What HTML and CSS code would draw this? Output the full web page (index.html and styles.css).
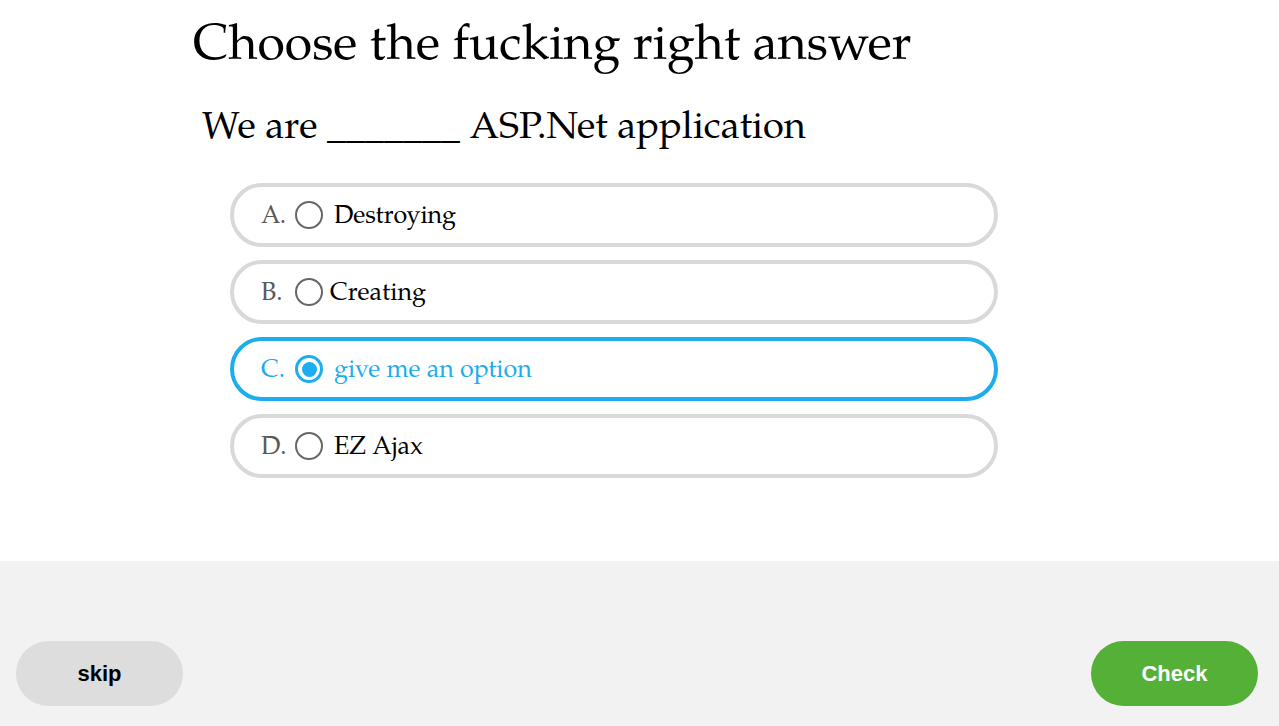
FILE: index.html
```html
<!DOCTYPE html>
<html>
<head>
<meta charset="utf-8">
<link rel="stylesheet" href="styles.css">
</head>
<body>
<div class="page">
  <main class="main">
    <h1 class="title">Choose the fucking right answer</h1>
    <p class="question">We are _______ ASP.Net application</p>
    <ul class="options">
      <li class="option"><span class="letter">A.</span><span class="radio"></span><span class="label">Destroying</span></li>
      <li class="option"><span class="letter">B.</span><span class="radio"></span><span class="label label-tight">Creating</span></li>
      <li class="option selected"><span class="letter">C.</span><span class="radio"></span><span class="label">give me an option</span></li>
      <li class="option"><span class="letter">D.</span><span class="radio"></span><span class="label">EZ Ajax</span></li>
    </ul>
  </main>
  <footer class="footer">
    <button class="btn btn-skip">skip</button>
    <button class="btn btn-check">Check</button>
  </footer>
</div>
</body>
</html>
```
FILE: styles.css
```css
* { box-sizing: border-box; }
html, body { margin: 0; padding: 0; background: #fff; }
.page {
  width: 1279px;
  height: 726px;
  display: flex;
  flex-direction: column;
  font-family: "Palatino Linotype", "Book Antiqua", Palatino, "TeX Gyre Pagella", "URW Palladio L", P052, "Liberation Serif", serif;
}
.main {
  height: 561px;
  padding: 18px 0 0 193px;
}
.title {
  margin: 0;
  font-weight: normal;
  font-size: 50px;
  line-height: 60px;
  color: #000;
}
.question {
  margin: 28px 0 0 9px;
  font-size: 38px;
  line-height: 48px;
  color: #000;
}
.options {
  list-style: none;
  margin: 29px 0 0 37px;
  padding: 0;
  display: flex;
  flex-direction: column;
  gap: 13px;
  width: 768px;
}
.option {
  height: 64px;
  border: 4px solid #d9d9d9;
  border-radius: 32px;
  display: flex;
  align-items: center;
  padding-left: 27px;
  font-size: 25px;
  color: #000;
}
.letter, .label { padding-top: 4px; }
.letter {
  color: #5a5a5a;
  width: 34px;
}
.radio {
  width: 28px;
  height: 28px;
  border: 2px solid #666;
  border-radius: 50%;
  position: relative;
}
.label { margin-left: 11px; }
.label-tight { margin-left: 7px; }
.option.selected {
  border-color: #1cadef;
  color: #1cadef;
}
.option.selected .letter { color: #1cadef; }
.option.selected .radio { border: 3px solid #1cadef; }
.option.selected .radio::after {
  content: "";
  position: absolute;
  left: 3.5px;
  top: 3.5px;
  width: 15px;
  height: 15px;
  border-radius: 50%;
  background: #1cadef;
}
.footer {
  height: 165px;
  background: #f2f2f2;
  display: flex;
  justify-content: space-between;
  align-items: flex-start;
  padding: 80px 21px 0 16px;
}
.btn {
  width: 167px;
  height: 65px;
  border: none;
  border-radius: 33px;
  font-family: "Liberation Sans", Arial, sans-serif;
  font-weight: bold;
  font-size: 22px;
  padding: 0;
}
.btn-skip { background: #dddddd; color: #000; }
.btn-check { background: #54b036; color: #fff; }
```
